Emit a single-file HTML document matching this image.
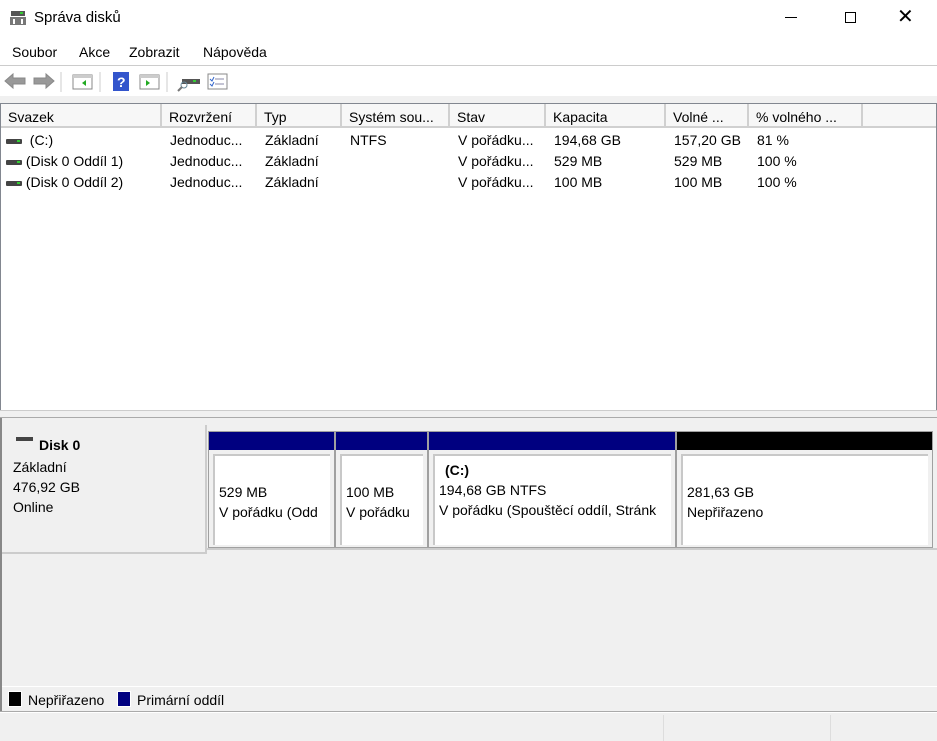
<!DOCTYPE html><html><head><meta charset="utf-8"><style>
*{margin:0;padding:0;box-sizing:border-box}
body{width:937px;height:741px;background:#f0f0f0;font-family:"Liberation Sans",sans-serif;font-size:14px;color:#000;position:relative;overflow:hidden}
.a{position:absolute;white-space:nowrap}
.hd{position:absolute;top:104px;height:24px;border-right:2px solid #d0d0d0;border-bottom:2px solid #d0d0d0;padding:5px 7px;background:#f7f7f7}
.seg{position:absolute;top:431px;height:117px;border:1px solid #a0a0a0;background:#f0f0f0}
.seg .bar{position:absolute;left:0;right:0;top:0;height:18px}
.seg .box{position:absolute;left:4px;right:4px;top:22px;bottom:2px;background:#fff;border-left:2px solid #c8c8c8;border-top:2px solid #c8c8c8;padding:26px 6px 0 4px;line-height:20px;overflow:hidden;white-space:nowrap}
.dk{display:inline-block;width:16px;height:5px;background:#444;border-radius:1px;position:relative;vertical-align:middle}
.dk:after{content:"";position:absolute;right:2px;top:1px;width:3px;height:2px;background:#3c3}
</style></head><body>
<div class="a" style="left:0;top:0;width:937px;height:96px;background:#fff"></div>
<svg class="a" style="left:9px;top:10px" width="18" height="16"><rect x="2" y="1" width="14" height="5" fill="#555"/><rect x="11" y="2" width="3" height="2" fill="#3c3"/><rect x="1" y="7" width="16" height="8" fill="#777"/><rect x="4" y="9" width="2" height="5" fill="#fff"/><rect x="12" y="9" width="2" height="5" fill="#fff"/></svg>
<div class="a" style="left:34px;top:9px;font-size:15px">Správa disků</div>
<div class="a" style="left:785px;top:17px;width:12px;height:1px;background:#000"></div>
<div class="a" style="left:845px;top:12px;width:11px;height:11px;border:1px solid #000"></div>
<div class="a" style="left:897px;top:4px;font-size:20px;font-weight:100">✕</div>
<div class="a" style="left:12px;top:44px">Soubor</div>
<div class="a" style="left:79px;top:44px">Akce</div>
<div class="a" style="left:129px;top:44px">Zobrazit</div>
<div class="a" style="left:203px;top:44px">Nápověda</div>
<div class="a" style="left:0;top:65px;width:937px;height:1px;background:#ccc"></div>
<svg class="a" style="left:4px;top:70px" width="230" height="24">
<path d="M1 11 L9 4 V8 H21 V14 H9 V18Z" fill="#999" stroke="#888"/>
<path d="M50 11 L42 4 V8 H30 V14 H42 V18Z" fill="#999" stroke="#888"/>
<line x1="57" y1="2" x2="57" y2="22" stroke="#ccc"/>
<rect x="69" y="5" width="19" height="14" fill="#fff" stroke="#888"/><rect x="69" y="5" width="19" height="3" fill="#ccc"/><path d="M82 10 L78 13 L82 16Z" fill="#2a2"/>
<line x1="96" y1="2" x2="96" y2="22" stroke="#ccc"/>
<rect x="109" y="2" width="16" height="19" fill="#3355cc"/><text x="113" y="17" fill="#fff" font-size="14" font-weight="bold" font-family="Liberation Sans">?</text>
<rect x="136" y="5" width="19" height="14" fill="#fff" stroke="#888"/><rect x="136" y="5" width="19" height="3" fill="#ccc"/><path d="M142 10 L146 13 L142 16Z" fill="#2a2"/>
<line x1="163" y1="2" x2="163" y2="22" stroke="#ccc"/>
<rect x="178" y="9" width="18" height="5" fill="#555"/><rect x="189" y="10" width="3" height="2" fill="#3c3"/><circle cx="180" cy="15" r="3" fill="none" stroke="#689"/><line x1="178" y1="17" x2="174" y2="21" stroke="#777" stroke-width="2"/>
<rect x="204" y="4" width="19" height="15" fill="#fff" stroke="#888"/><line x1="211" y1="9" x2="220" y2="9" stroke="#88a"/><line x1="211" y1="14" x2="220" y2="14" stroke="#88a"/><path d="M206 9l2 2 2-4M206 14l2 2 2-4" stroke="#36c" fill="none"/>
</svg>
<div class="a" style="left:0;top:103px;width:937px;height:310px;background:#fff;border:1px solid #828790"></div>
<div class="hd" style="left:1px;width:161px">Svazek</div>
<div class="hd" style="left:162px;width:95px">Rozvržení</div>
<div class="hd" style="left:257px;width:85px">Typ</div>
<div class="hd" style="left:342px;width:108px">Systém sou...</div>
<div class="hd" style="left:450px;width:96px">Stav</div>
<div class="hd" style="left:546px;width:120px">Kapacita</div>
<div class="hd" style="left:666px;width:83px">Volné ...</div>
<div class="hd" style="left:749px;width:114px">% volného ...</div>
<div class="hd" style="left:863px;width:73px;border-right:none"></div>
<div class="a" style="left:6px;top:130px;line-height:21px">
<div><span class="dk"></span>&nbsp;&nbsp;(C:)</div><div><span class="dk"></span> (Disk 0 Oddíl 1)</div><div><span class="dk"></span> (Disk 0 Oddíl 2)</div></div>
<div class="a" style="left:170px;top:130px;line-height:21px">Jednoduc...<br>Jednoduc...<br>Jednoduc...</div>
<div class="a" style="left:265px;top:130px;line-height:21px">Základní<br>Základní<br>Základní</div>
<div class="a" style="left:350px;top:130px;line-height:21px">NTFS</div>
<div class="a" style="left:458px;top:130px;line-height:21px">V pořádku...<br>V pořádku...<br>V pořádku...</div>
<div class="a" style="left:554px;top:130px;line-height:21px">194,68 GB<br>529 MB<br>100 MB</div>
<div class="a" style="left:674px;top:130px;line-height:21px">157,20 GB<br>529 MB<br>100 MB</div>
<div class="a" style="left:757px;top:130px;line-height:21px">81 %<br>100 %<br>100 %</div>
<div class="a" style="left:0;top:410px;width:937px;height:8px;background:#f0f0f0;border-top:1px solid #ccc;border-bottom:1px solid #aaa"></div>
<div class="a" style="left:0;top:418px;width:2px;height:295px;background:#888"></div>
<div class="a" style="left:2px;top:425px;width:205px;height:129px;background:#f0f0f0;border-right:2px solid #ccc;border-bottom:2px solid #ccc"></div>
<div class="a" style="left:16px;top:437px;width:17px;height:4px;background:#444"></div>
<div class="a" style="left:39px;top:437px;font-weight:bold">Disk 0</div>
<div class="a" style="left:13px;top:457px;line-height:20px">Základní<br>476,92 GB<br>Online</div>
<div class="a" style="left:207px;top:548px;width:730px;height:2px;background:#ccc"></div>
<div class="seg" style="left:208px;width:127px"><div class="bar" style="background:#000080"></div><div class="box">529 MB<br>V pořádku (Odd</div></div>
<div class="seg" style="left:335px;width:93px"><div class="bar" style="background:#000080"></div><div class="box">100 MB<br>V pořádku</div></div>
<div class="seg" style="left:428px;width:248px"><div class="bar" style="background:#000080"></div><div class="box" style="padding-top:4px"><b style="margin-left:6px">(C:)</b><br>194,68 GB NTFS<br>V pořádku (Spouštěcí oddíl, Stránk</div></div>
<div class="seg" style="left:676px;width:257px"><div class="bar" style="background:#000"></div><div class="box">281,63 GB<br>Nepřiřazeno</div></div>
<div class="a" style="left:2px;top:686px;width:935px;height:1px;background:#fff"></div>
<div class="a" style="left:8px;top:691px;width:14px;height:16px;background:#000;border:1px solid #fff"></div>
<div class="a" style="left:28px;top:692px">Nepřiřazeno</div>
<div class="a" style="left:117px;top:691px;width:14px;height:16px;background:#000080;border:1px solid #fff"></div>
<div class="a" style="left:137px;top:692px">Primární oddíl</div>
<div class="a" style="left:0;top:711px;width:937px;height:2px;background:#aaa;border-bottom:1px solid #fff"></div>
<div class="a" style="left:663px;top:715px;width:1px;height:26px;background:#ddd"></div>
<div class="a" style="left:830px;top:715px;width:1px;height:26px;background:#ddd"></div>
</body></html>
